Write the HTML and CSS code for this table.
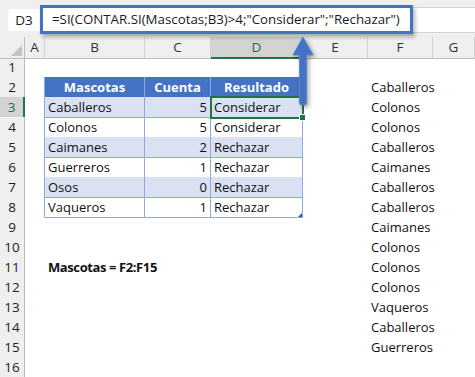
FILE: index.html
```html
<!DOCTYPE html>
<html lang="es">
<head>
  <meta charset="UTF-8" />
  <title>Hoja - CONTAR.SI</title>
  <link rel="stylesheet" href="styles.css">
</head>
<body>

<div class="screen">

  <div class="fbar">
    <div class="namebox">D3</div>
    <div class="fx">
      <div class="fx-box">=SI(CONTAR.SI(Mascotas;B3)&gt;4;"Considerar";"Rechazar")</div>
    </div>
  </div>

  <div class="sheet">
    <div class="row cols">
      <div class="corner"></div>
      <div>A</div><div>B</div><div>C</div><div class="on">D</div><div>E</div><div>F</div><div>G</div>
    </div>

    <div class="row">
      <div class="rh">1</div>
      <div></div><div class="top"></div><div class="top"></div><div class="top"></div><div></div><div></div><div></div>
    </div>
    <div class="row">
      <div class="rh">2</div>
      <div class="edge"></div>
      <div class="t th">Mascotas</div><div class="t th">Cuenta</div><div class="t th">Resultado</div>
      <div></div><div>Caballeros</div><div></div>
    </div>
    <div class="row">
      <div class="rh on">3</div>
      <div class="edge"></div>
      <div class="t band">Caballeros</div><div class="t band num">5</div><div class="t band active">Considerar</div>
      <div></div><div>Colonos</div><div></div>
    </div>
    <div class="row">
      <div class="rh">4</div>
      <div class="edge"></div>
      <div class="t">Colonos</div><div class="t num">5</div><div class="t">Considerar</div>
      <div></div><div>Colonos</div><div></div>
    </div>
    <div class="row">
      <div class="rh">5</div>
      <div class="edge"></div>
      <div class="t band">Caimanes</div><div class="t band num">2</div><div class="t band">Rechazar</div>
      <div></div><div>Caballeros</div><div></div>
    </div>
    <div class="row">
      <div class="rh">6</div>
      <div class="edge"></div>
      <div class="t">Guerreros</div><div class="t num">1</div><div class="t">Rechazar</div>
      <div></div><div>Caimanes</div><div></div>
    </div>
    <div class="row">
      <div class="rh">7</div>
      <div class="edge"></div>
      <div class="t band">Osos</div><div class="t band num">0</div><div class="t band">Rechazar</div>
      <div></div><div>Caballeros</div><div></div>
    </div>
    <div class="row">
      <div class="rh">8</div>
      <div class="edge"></div>
      <div class="t">Vaqueros</div><div class="t num">1</div><div class="t last">Rechazar</div>
      <div></div><div>Caballeros</div><div></div>
    </div>
    <div class="row">
      <div class="rh">9</div>
      <div></div><div></div><div></div><div></div><div></div><div>Caimanes</div><div></div>
    </div>
    <div class="row">
      <div class="rh">10</div>
      <div></div><div></div><div></div><div></div><div></div><div>Colonos</div><div></div>
    </div>
    <div class="row">
      <div class="rh">11</div>
      <div></div><div class="note">Mascotas = F2:F15</div><div></div><div></div><div></div><div>Colonos</div><div></div>
    </div>
    <div class="row">
      <div class="rh">12</div>
      <div></div><div></div><div></div><div></div><div></div><div>Colonos</div><div></div>
    </div>
    <div class="row">
      <div class="rh">13</div>
      <div></div><div></div><div></div><div></div><div></div><div>Vaqueros</div><div></div>
    </div>
    <div class="row">
      <div class="rh">14</div>
      <div></div><div></div><div></div><div></div><div></div><div>Caballeros</div><div></div>
    </div>
    <div class="row">
      <div class="rh">15</div>
      <div></div><div></div><div></div><div></div><div></div><div>Guerreros</div><div></div>
    </div>
    <div class="row">
      <div class="rh">16</div>
      <div></div><div></div><div></div><div></div><div></div><div></div><div></div>
    </div>
  </div>

  <!-- flecha que apunta de la celda a la fórmula -->
  <svg class="arrow" width="28" height="74" viewBox="0 0 28 74">
    <path d="M14 1 L24 19 L17.5 19 L17.5 67 Q17.5 69 15.5 69 L12.5 69 Q10.5 69 10.5 67 L10.5 19 L4 19 Z" />
  </svg>

</div>

</body>
</html>
```

FILE: styles.css
```css
* { margin: 0; padding: 0; box-sizing: border-box; }
body { background: #fff; font-family: "Open Sans", "Noto Sans", sans-serif; color: #111; }
.screen { position: relative; width: 475px; }

/* barra de fórmulas */
.fbar { display: flex; height: 37px; background: #efefef; padding-left: 8px; }
.namebox { width: 34px; height: 22px; margin-top: 9px; background: #fff; border-radius: 4px 0 0 4px; font-size: 13.5px; line-height: 22px; text-align: center; color: #222; padding-right: 2px; }
.fx { flex: 1; height: 26px; margin-top: 7px; background: #fff; border-top: 1px solid #d4d4d4; border-bottom: 1px solid #d4d4d4; }
.fx-box { position: relative; z-index: 2; width: 373px; height: 29px; margin: -3px 0 0 -2px; border: 3px solid #4472c4; background: #fff; box-shadow: 2px 3px 4px rgba(0,0,0,0.3); padding-left: 9px; font-size: 13.3px; line-height: 22px; color: #1a1a1a; white-space: nowrap; }

/* hoja */
.row { display: grid; grid-template-columns: 25px 20px 100px 66px 92px 65px 65px 1fr; height: 20px; }
.row > div { padding: 0 3px; font-size: 13px; line-height: 20px; white-space: nowrap; border-right: 1px solid transparent; border-bottom: 1px solid transparent; }

.cols > div { background: #efefef; border-right-color: #d2d2d2; border-bottom-color: #bcbcbc; text-align: center; color: #333; font-size: 13.5px; }
.cols > div.on { background: #d3d3d3; color: #1e6e42; border-bottom: 2px solid #217346; }
.cols .corner { position: relative; border-right-color: #bcbcbc; }
.cols .corner::after { content: ""; position: absolute; right: 2px; bottom: 2px; border-left: 11px solid transparent; border-bottom: 11px solid #c3c3c3; }

.row > .rh { background: #efefef; border-right-color: #bcbcbc; border-bottom-color: #d2d2d2; text-align: center; color: #222; font-size: 13.5px; padding: 0; }
.row > .rh.on { background: #d3d3d3; color: #1e6e42; border-right: 2px solid #217346; }

/* tabla */
.row > .top { border-bottom-color: #8ea9db; }
.row > .edge { border-right-color: #8ea9db; }
.row > .t { border-right-color: #8ea9db; border-bottom-color: #8ea9db; }
.row > .th { background: #4472c4; color: #fff; font-weight: 700; text-align: center; border-right-color: #8eaadb; }
.row > .band { background: #d9e1f2; }
.row > .num { text-align: right; }
.row > .last { position: relative; }
.row > .last::after { content: ""; position: absolute; right: 0; bottom: 0; border-left: 4px solid transparent; border-bottom: 4px solid #2f55a4; }

.row > .active { position: relative; outline: 2px solid #217346; outline-offset: -1px; z-index: 1; }
.row > .active::after { content: ""; position: absolute; right: -4px; bottom: -4px; width: 5px; height: 5px; background: #217346; border: 1px solid #fff; }

.row > .note { font-weight: 700; overflow: visible; letter-spacing: -0.4px; }

.arrow { position: absolute; left: 289px; top: 36px; z-index: 3; filter: drop-shadow(2px 2px 2px rgba(0,0,0,0.35)); }
.arrow path { fill: #4472c4; stroke: #5b86cf; stroke-width: 1; }
```
